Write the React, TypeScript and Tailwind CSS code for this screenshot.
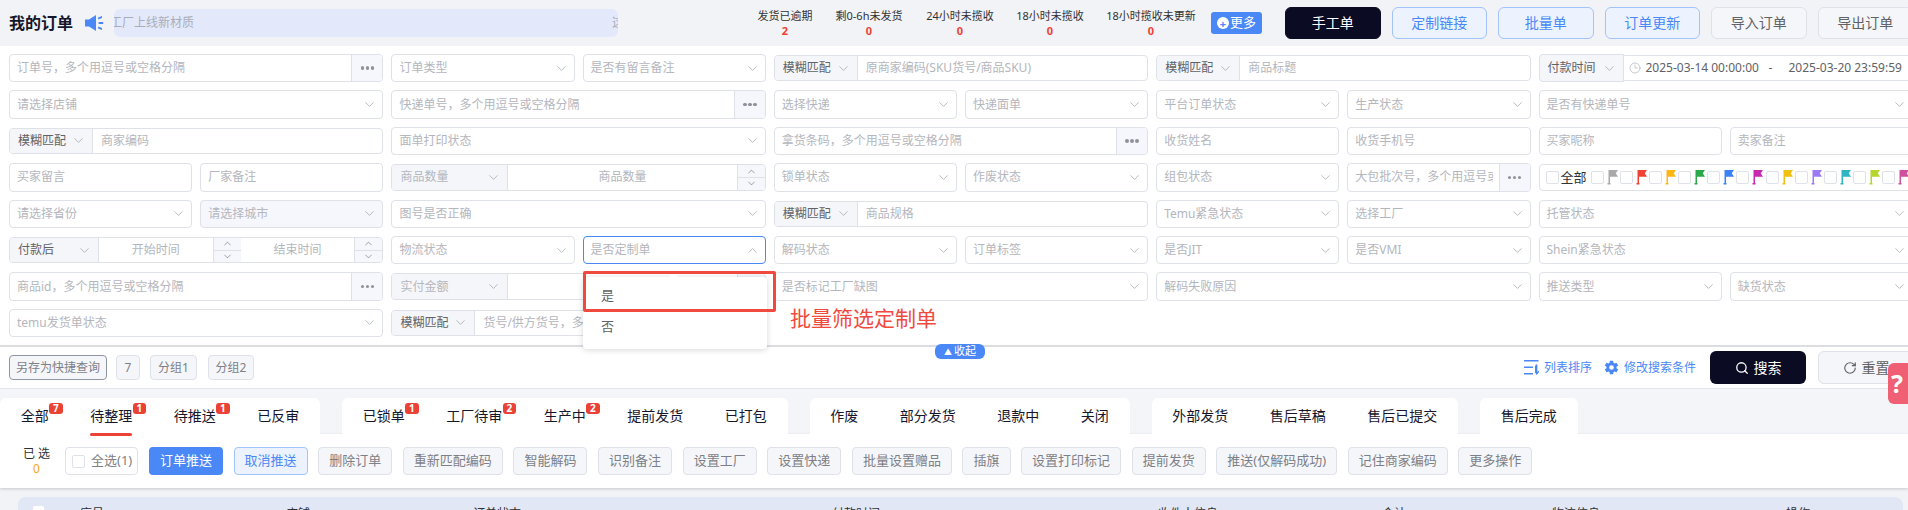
import { ChevronDown, ChevronUp, Clock3, RotateCw, Search } from "lucide-react";
import { IoSettingsSharp } from "react-icons/io5";

const stats = [
  { label: "发货已逾期", value: "2", w: "w-[84px]" },
  { label: "剩0-6h未发货", value: "0", w: "w-[84px]" },
  { label: "24小时未揽收", value: "0", w: "w-[98px]" },
  { label: "18小时未揽收", value: "0", w: "w-[82px]" },
  { label: "18小时揽收未更新", value: "0", w: "w-[120px]" },
];

const flagColors = [
  "#a9a9a9", "#f04134", "#fdb714", "#2aa84a", "#3b82f6", "#c72ab0",
  "#f1c012", "#9b7bf5", "#2fb5c3", "#b5d62f", "#d04f9f",
];

const tabGroups = [
  [
    { name: "全部", badge: "7" },
    { name: "待整理", badge: "1", active: true },
    { name: "待推送", badge: "1" },
    { name: "已反审" },
  ],
  [
    { name: "已锁单", badge: "1" },
    { name: "工厂待审", badge: "2" },
    { name: "生产中", badge: "2" },
    { name: "提前发货" },
    { name: "已打包" },
  ],
  [{ name: "作废" }, { name: "部分发货" }, { name: "退款中" }, { name: "关闭" }],
  [{ name: "外部发货" }, { name: "售后草稿" }, { name: "售后已提交" }],
  [{ name: "售后完成" }],
];

const actions = [
  "删除订单", "重新匹配编码", "智能解码", "识别备注", "设置工厂", "设置快递", "批量设置赠品", "插旗",
  "设置打印标记", "提前发货", "推送(仅解码成功)", "记住商家编码", "更多操作",
];

function Select({ text, span, muted, focus }: { text: string; span?: boolean; muted?: boolean; focus?: boolean }) {
  return (
    <div
      className={`flex h-full items-center justify-between rounded border pl-[7px] pr-[5px] text-xs text-[#b4b6bd] ${span ? "col-span-2" : ""} ${muted ? "bg-[#f5f7fd]" : "bg-white"} ${focus ? "border-[#4a88f7]" : "border-[#dfe1e9]"}`}
    >
      <span className="truncate">{text}</span>
      {focus ? (
        <ChevronUp size={15} strokeWidth={1} className="shrink-0 text-[#8f929b]" />
      ) : (
        <ChevronDown size={15} strokeWidth={1} className="shrink-0 text-[#8f929b]" />
      )}
    </div>
  );
}

function TextInput({ text }: { text: string }) {
  return (
    <div className="flex h-full items-center rounded border border-[#dfe1e9] bg-white pl-[7px] text-xs text-[#b4b6bd]">
      {text}
    </div>
  );
}

function DotsInput({ text, span = true }: { text: string; span?: boolean }) {
  return (
    <div className={`flex h-full overflow-hidden rounded border border-[#dfe1e9] bg-white text-xs text-[#b4b6bd] ${span ? "col-span-2" : ""}`}>
      <span className="mr-[6px] flex-1 self-center overflow-hidden whitespace-nowrap pl-[7px]">{text}</span>
      <span className="flex w-[31px] shrink-0 items-center justify-center gap-[1.5px] border-l border-[#dfe1e9] bg-[#f5f7fd]">
        <i className="size-[3.5px] rounded-full bg-[#8f929b]" />
        <i className="size-[3.5px] rounded-full bg-[#8f929b]" />
        <i className="size-[3.5px] rounded-full bg-[#8f929b]" />
      </span>
    </div>
  );
}

function MatchInput({ text, prefix = "模糊匹配" }: { text: string; prefix?: string }) {
  return (
    <div className="col-span-2 my-px flex overflow-hidden rounded border border-[#dfe1e9] bg-white text-xs">
      <span className="flex w-[83px] shrink-0 items-center justify-between border-r border-[#dfe1e9] bg-[#f5f6fa] pl-2 pr-[6px] text-[#606266]">
        {prefix}
        <ChevronDown size={15} strokeWidth={1} className="text-[#8f929b]" />
      </span>
      <span className="flex-1 self-center truncate pl-2 text-[#b4b6bd]">{text}</span>
    </div>
  );
}

function Spinner() {
  return (
    <span className="flex w-7 shrink-0 flex-col border-l border-[#dfe1e9] bg-[#f5f7fd] text-[#606266]">
      <span className="flex flex-1 items-center justify-center border-b border-[#dfe1e9]">
        <ChevronUp size={11} strokeWidth={1.3} />
      </span>
      <span className="flex flex-1 items-center justify-center">
        <ChevronDown size={11} strokeWidth={1.3} />
      </span>
    </span>
  );
}

function RangeInput({ prefix }: { prefix: string }) {
  return (
    <div className="col-span-2 my-px flex overflow-hidden rounded border border-[#dfe1e9] bg-white text-xs text-[#b4b6bd]">
      <span className="flex w-[116px] shrink-0 items-center justify-between border-r border-[#dfe1e9] bg-[#f5f6fa] pl-2 pr-[6px]">
        {prefix}
        <ChevronDown size={15} strokeWidth={1} className="text-[#8f929b]" />
      </span>
      <span className="flex-1 self-center text-center">商品数量</span>
      <Spinner />
    </div>
  );
}

function Flag({ color }: { color: string }) {
  return (
    <svg width="11" height="16" viewBox="0 0 11 16" className="shrink-0">
      <path d="M1.5 1H3v13.5H1.5z" fill={color} />
      <path d="M.5 14h3v1.5h-3z" fill={color} />
      <path d="M3 1h8L8.8 4.2 11 7.8H3z" fill={color} />
    </svg>
  );
}

function Box() {
  return <span className="size-[13px] shrink-0 rounded-[2px] border border-[#dfe1e9] bg-white" />;
}

function SpeakerIcon() {
  return (
    <svg width="19" height="16" viewBox="0 0 19 16" fill="#4a88f7" className="shrink-0">
      <path d="M0 4.5h4L11 0v16L4 11.5H0z" />
      <path d="M13 2.5l4-1.5v2l-3.6 1.4zM13.6 7h4.6v2h-4.6zM13 13.5l.4-1.9 3.6 1.4v2z" />
    </svg>
  );
}

function SortIcon() {
  return (
    <svg width="15" height="15" viewBox="0 0 15 15" fill="#4a88f7" className="shrink-0">
      <path d="M0 0h14.5v1.6H0zM0 6.5h9v1.6H0zM0 13h9v1.6H0z" />
      <path d="M12 4.5h1.4v7.5l1.6-1.5v1.8L12.7 15 11 12.6V6z" />
    </svg>
  );
}

function PlainButton({ text, className = "" }: { text: string; className?: string }) {
  return (
    <span className={`flex h-[25px] shrink-0 items-center justify-center rounded border bg-[#f5f6fa] text-xs text-[#7d7f86] ${className}`}>
      {text}
    </span>
  );
}

function TopButton({ text, variant }: { text: string; variant: "dark" | "blue" | "gray" }) {
  const styles = {
    dark: "border-[#0b0b24] bg-[#0b0b24] text-white",
    blue: "border-[#a3c3fb] bg-[#ecf3fe] text-[#4a88f7]",
    gray: "border-[#dfe1e9] bg-[#f5f6fa] text-[#606266]",
  };
  return (
    <span className={`flex h-8 w-[95.5px] shrink-0 items-center justify-center rounded-md border text-sm ${styles[variant]}`}>
      {text}
    </span>
  );
}

export default function App() {
  return (
    <div
      className="relative h-[510px] w-[1908px] overflow-hidden bg-[#f2f3f7]"
      style={{ fontFamily: '"Noto Sans", "Noto Sans CJK SC", sans-serif' }}
    >
      {/* header */}
      <header className="flex h-[46px] items-center pl-[9px]">
        <h1 className="w-[76px] shrink-0 text-base font-semibold text-[#16162c]">我的订单</h1>
        <SpeakerIcon />
        <div className="ml-[10px] flex h-7 w-[504px] shrink-0 items-center justify-between overflow-hidden rounded-md bg-[#e3e9fa] text-xs text-[#a9adba]">
          <span className="ml-[-4px]">工厂上线新材质</span>
          <span className="mr-[-6px]">这</span>
        </div>
        <div className="ml-[125px] flex shrink-0">
          {stats.map((s) => (
            <div key={s.label} className={`flex flex-col items-center text-[11px] leading-[15px] text-[#303133] ${s.w}`}>
              <span className="whitespace-nowrap">{s.label}</span>
              <span className="font-bold text-[#ea4335]">{s.value}</span>
            </div>
          ))}
        </div>
        <span className="flex h-[22px] w-[51px] shrink-0 items-center justify-center gap-px rounded-[3px] bg-[#4a88f7] text-[13px] text-white">
          <span className="flex size-3 items-center justify-center rounded-full bg-white text-[11px] font-bold leading-none text-[#4a88f7]">+</span>
          更多
        </span>
        <div className="ml-[23px] flex shrink-0 gap-[11px]">
          <TopButton text="手工单" variant="dark" />
          <TopButton text="定制链接" variant="blue" />
          <TopButton text="批量单" variant="blue" />
          <TopButton text="订单更新" variant="blue" />
          <TopButton text="导入订单" variant="gray" />
          <TopButton text="导出订单" variant="gray" />
        </div>
      </header>

      {/* filter panel */}
      <section className="bg-white pt-2">
        <div className="ml-[9px] grid w-[1904px] grid-cols-[repeat(10,183.2px)] auto-rows-[28.4px] gap-2">
          <DotsInput text="订单号，多个用逗号或空格分隔" />
          <Select text="订单类型" />
          <Select text="是否有留言备注" />
          <MatchInput text="原商家编码(SKU货号/商品SKU)" />
          <MatchInput text="商品标题" />
          <div className="col-span-2 flex text-xs text-[#606266]">
            <span className="flex w-[85px] shrink-0 items-center justify-between rounded-l border border-[#dfe1e9] bg-[#f5f6fa] pl-2 pr-[6px]">
              付款时间
              <ChevronDown size={15} strokeWidth={1} className="text-[#8f929b]" />
            </span>
            <span className="my-px flex flex-1 items-center rounded-r border-y border-r border-[#dfe1e9] pl-[5px]">
              <Clock3 size={12} strokeWidth={1} className="mr-[5px] text-[#8f929b]" />
              <span className="w-[107px] whitespace-nowrap">2025-03-14 00:00:00</span>
              <span className="w-[36px] text-center">-</span>
              <span className="whitespace-nowrap">2025-03-20 23:59:59</span>
            </span>
          </div>

          <Select text="请选择店铺" span />
          <DotsInput text="快递单号，多个用逗号或空格分隔" />
          <Select text="选择快递" />
          <Select text="快递面单" />
          <Select text="平台订单状态" />
          <Select text="生产状态" />
          <Select text="是否有快递单号" span />

          <MatchInput text="商家编码" />
          <Select text="面单打印状态" span />
          <DotsInput text="拿货条码，多个用逗号或空格分隔" />
          <TextInput text="收货姓名" />
          <TextInput text="收货手机号" />
          <TextInput text="买家昵称" />
          <TextInput text="卖家备注" />

          <TextInput text="买家留言" />
          <TextInput text="厂家备注" />
          <RangeInput prefix="商品数量" />
          <Select text="锁单状态" />
          <Select text="作废状态" />
          <Select text="组包状态" />
          <DotsInput text="大包批次号，多个用逗号或空格分隔" span={false} />
          <div className="col-span-2 my-px flex items-center overflow-hidden rounded border border-[#dfe1e9] bg-white pl-[6px] text-[13px] text-[#303133]">
            <Box />
            <span className="ml-[2px] mr-1 shrink-0">全部</span>
            <div className="flex gap-[2.2px]">
              {flagColors.map((c) => (
                <span key={c} className="flex shrink-0 items-center gap-[3px]">
                  <Box />
                  <Flag color={c} />
                </span>
              ))}
            </div>
          </div>

          <Select text="请选择省份" />
          <Select text="请选择城市" muted />
          <Select text="图号是否正确" span />
          <MatchInput text="商品规格" />
          <Select text="Temu紧急状态" />
          <Select text="选择工厂" />
          <Select text="托管状态" span />

          <div className="col-span-2 my-px flex overflow-hidden rounded border border-[#dfe1e9] bg-white text-xs text-[#b4b6bd]">
            <span className="flex w-[89px] shrink-0 items-center justify-between border-r border-[#dfe1e9] bg-[#f5f6fa] pl-2 pr-[6px] text-[#606266]">
              付款后
              <ChevronDown size={15} strokeWidth={1} className="text-[#8f929b]" />
            </span>
            <span className="flex-1 self-center text-center">开始时间</span>
            <Spinner />
            <span className="flex-1 self-center text-center">结束时间</span>
            <Spinner />
          </div>
          <Select text="物流状态" />
          <Select text="是否定制单" focus />
          <Select text="解码状态" />
          <Select text="订单标签" />
          <Select text="是否JIT" />
          <Select text="是否VMI" />
          <Select text="Shein紧急状态" span />

          <DotsInput text="商品id，多个用逗号或空格分隔" />
          <RangeInput prefix="实付金额" />
          <Select text="是否标记工厂缺图" span />
          <Select text="解码失败原因" span />
          <Select text="推送类型" />
          <Select text="缺货状态" />

          <Select text="temu发货单状态" span />
          <MatchInput text="货号/供方货号，多个用逗号或空格分隔" />
        </div>

        <div className="mt-2 h-[2px] bg-[#dcdde2]" />

        <div className="flex h-[41px] items-center pl-[9px]">
          <PlainButton text="另存为快捷查询" className="w-[98px] border-[#9095a6]" />
          <PlainButton text="7" className="ml-[9px] w-6 border-[#dfe1e9]" />
          <PlainButton text="分组1" className="ml-[10px] w-[47px] border-[#dfe1e9]" />
          <PlainButton text="分组2" className="ml-[11px] w-[46px] border-[#dfe1e9]" />
          <span className="ml-[1270px] flex shrink-0 items-center gap-[5px] text-xs text-[#4a88f7]">
            <SortIcon />
            列表排序
          </span>
          <span className="ml-3 flex shrink-0 items-center gap-[5px] text-xs text-[#4a88f7]">
            <IoSettingsSharp size={15} />
            修改搜索条件
          </span>
          <span className="ml-[14px] flex h-[33px] w-[96px] shrink-0 items-center justify-center gap-[5px] rounded-md bg-[#0b0b24] text-sm text-white">
            <Search size={14} strokeWidth={2.2} />
            搜索
          </span>
          <span className="ml-3 flex h-[33px] w-[96px] shrink-0 items-center justify-center gap-[5px] rounded-md border border-[#dfe1e9] bg-[#f5f6fa] text-sm text-[#606266]">
            <RotateCw size={14} strokeWidth={2} />
            重置
          </span>
        </div>
      </section>

      {/* status tabs */}
      <div className="flex h-[46px] items-end gap-[22px] border-t border-[#e2e3e8] bg-[#f4f5f9]">
        {tabGroups.map((group) => (
          <div key={group[0].name} className="flex h-9 rounded-t-md bg-white">
            {group.map((tab) => (
              <div key={tab.name} className="relative flex items-center px-[20.75px] text-sm text-[#16162c]">
                {tab.name}
                {tab.badge && (
                  <span className="absolute right-[7px] top-[5px] flex h-[11px] w-[13.5px] items-center justify-center rounded-[3px] bg-[#ea4335] text-[10px] font-bold text-white">
                    {tab.badge}
                  </span>
                )}
                {tab.active && (
                  <span className="absolute inset-x-[20.75px] bottom-[-2px] h-[3px] rounded-full bg-[#ea4335]" />
                )}
              </div>
            ))}
          </div>
        ))}
      </div>

      {/* bulk actions */}
      <div className="flex h-[54px] items-center bg-white shadow-[0_1px_3px_rgba(0,0,0,0.18)]">
        <div className="ml-[24px] flex w-[25px] shrink-0 flex-col items-center text-xs leading-[15px] text-[#303133]">
          <span className="whitespace-nowrap">已 选</span>
          <span className="text-[#f5a623]">0</span>
        </div>
        <span className="ml-[16px] flex h-7 w-[73px] shrink-0 items-center gap-[6px] rounded border border-[#dfe1e9] pl-[6px] text-[13px] text-[#7d7f86]">
          <Box />
          全选(1)
        </span>
        <div className="ml-[11px] flex gap-[10.6px]">
          <span className="flex h-7 items-center rounded bg-[#4a88f7] px-[11px] text-[13px] text-white">订单推送</span>
          <span className="flex h-7 items-center rounded border border-[#a3c3fb] bg-[#ecf3fe] px-[10px] text-[13px] text-[#4a88f7]">取消推送</span>
          {actions.map((a) => (
            <span key={a} className="flex h-7 shrink-0 items-center rounded border border-[#dfe1e9] bg-[#f5f6fa] px-[10px] text-[13px] text-[#7d7f86]">
              {a}
            </span>
          ))}
        </div>
      </div>

      {/* table head, cut off by the window */}
      <div className="ml-[18px] mt-[9px] flex h-10 w-[1885px] rounded-t-lg bg-[#e2e7f6] pt-[9px] text-xs text-[#303133]">
        <span className="ml-[15px] h-[13px] w-[11px] shrink-0 rounded-[2px] bg-white" />
        <span className="ml-[36px] w-[206px] shrink-0">序号</span>
        <span className="w-[187px] shrink-0">店铺</span>
        <span className="w-[359px] shrink-0">订单状态</span>
        <span className="w-[326px] shrink-0">付款时间</span>
        <span className="w-[224px] shrink-0">收件人信息</span>
        <span className="w-[170px] shrink-0">合计</span>
        <span className="w-[234px] shrink-0">物流信息</span>
        <span>操作</span>
      </div>

      {/* open dropdown */}
      <div className="absolute left-[583px] top-[277px] h-[72px] w-[184px] rounded bg-white pt-[3.5px] text-[13px] text-[#606266] shadow-[0_1px_6px_rgba(0,0,0,0.16)]">
        <span className="absolute left-[87px] top-[-3px] size-[7px] rotate-45 bg-white" />
        <div className="flex h-[31px] items-center pl-[18px]">是</div>
        <div className="flex h-[31px] items-center pl-[18px]">否</div>
      </div>
      <div className="absolute left-[583px] top-[271px] h-[41px] w-[193px] rounded-[2px] border-[3px] border-[#f04a3e]" />
      <span className="absolute left-[790px] top-[304px] text-[21px] leading-[28px] text-[#f04a3e]">批量筛选定制单</span>

      <span className="absolute left-[935px] top-[344px] flex h-[15px] w-[50px] items-center justify-center gap-[2px] rounded-[6px] bg-[#4a88f7] text-[11px] text-white">
        <span className="text-[8px]">▲</span>
        收起
      </span>

      {/* floating help */}
      <span className="absolute left-[1888px] top-[363px] flex h-[41px] w-[20px] items-center overflow-hidden rounded-l-md bg-[#ef6074] pl-[3px] text-[25px] font-bold text-white">
        ?
      </span>
    </div>
  );
}
